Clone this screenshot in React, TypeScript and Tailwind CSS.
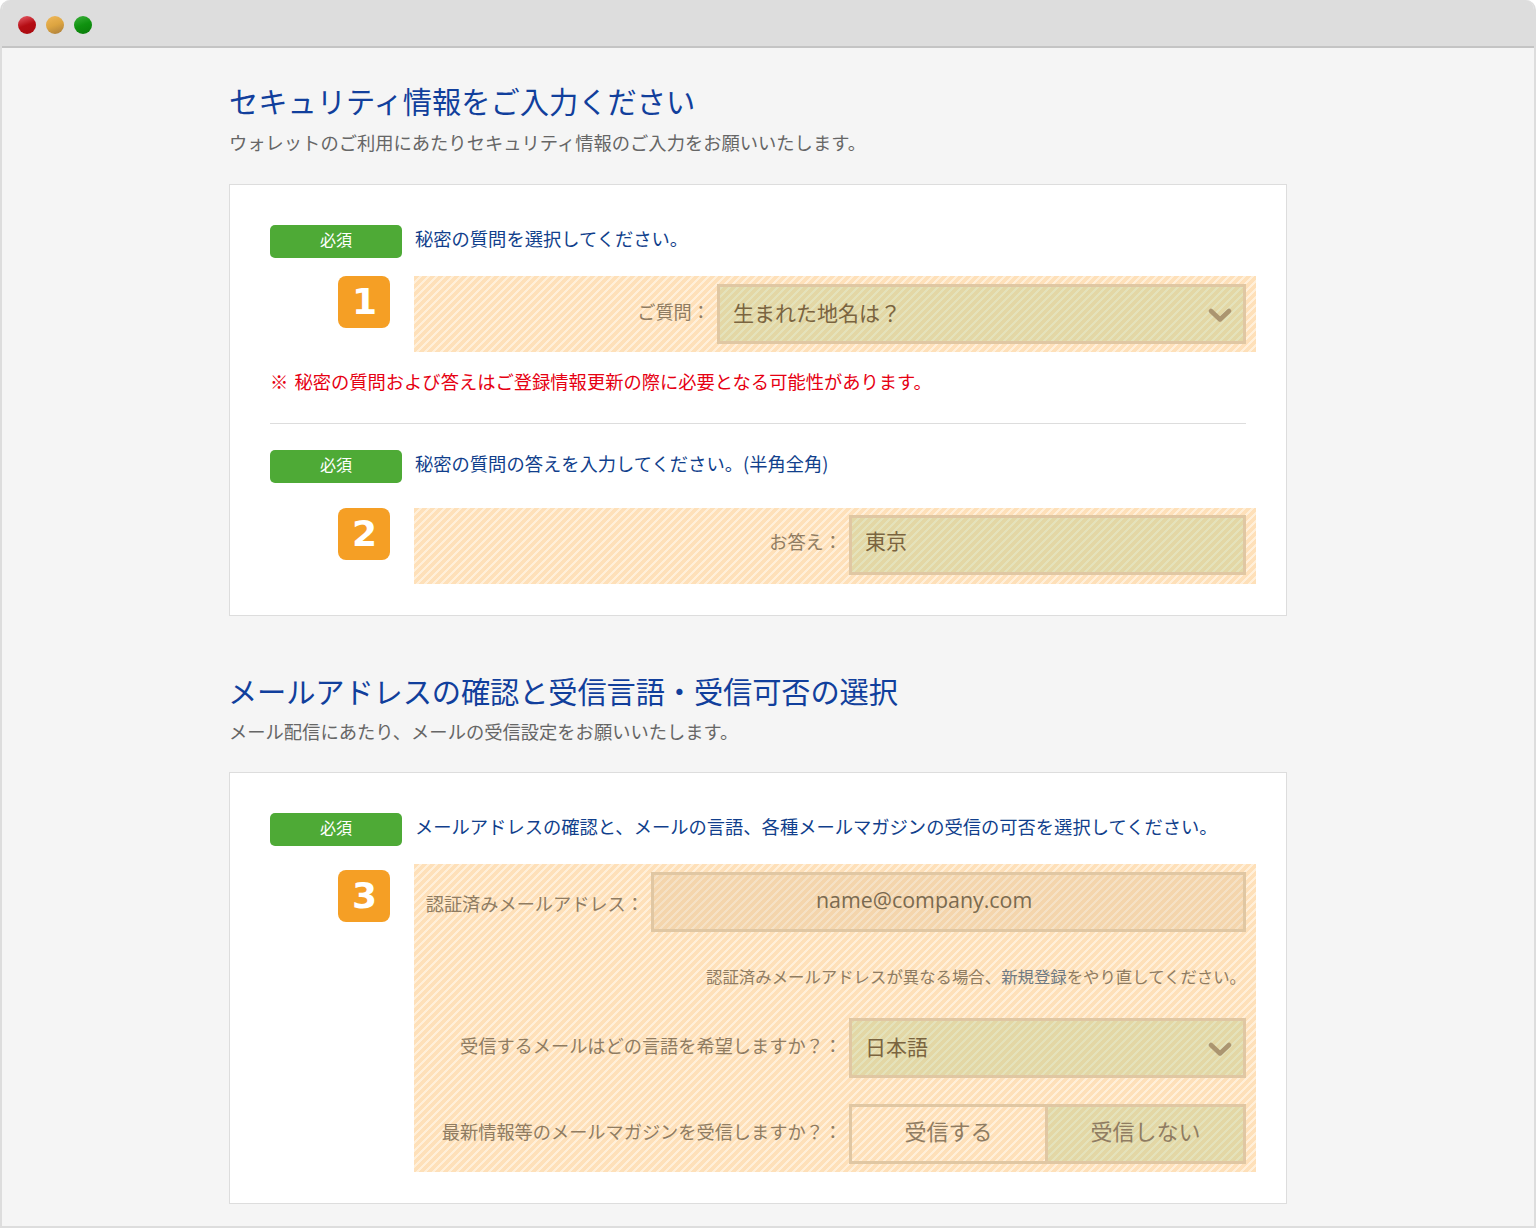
import React from 'react';

const jp = 'font-["Noto_Sans_CJK_JP","Liberation_Sans",sans-serif]';
const hatch =
    'bg-[repeating-linear-gradient(135deg,#fee0b9_0px,#fee0b9_3.54px,#ffefd9_3.54px,#ffefd9_5.66px)]';
const field = 'border-[3px] border-[#e0c7a3] bg-[#a4c476]/30 text-[#7a6440]';

function Required({ children }: { children: React.ReactNode }) {
    return (
        <div className="flex items-start">
            <div className="w-[132px] h-[33px] pb-[2px] rounded-[5px] bg-[#4eaa36] text-white text-[16px] leading-[29px] text-center">
                必須
            </div>
            <p className="ml-[13px] text-[18.3px] leading-[27px] text-[#113f8c] whitespace-nowrap">
                {children}
            </p>
        </div>
    );
}

function Step({ n, className = '' }: { n: number; className?: string }) {
    return (
        <div className={`w-[52px] h-[52px] ml-[68px] mr-[24px] pl-[1px] shrink-0 rounded-[8px] bg-[#f59f25] text-white text-center font-['DejaVu_Sans'] font-bold text-[36px] leading-[52px] ${className}`}>
            {n}
        </div>
    );
}

function Chevron() {
    return (
        <svg width="24" height="16" viewBox="0 0 24 16" className="shrink-0 mt-[6px]">
            <polyline
                points="3,3 12,11.5 21,3"
                fill="none"
                stroke="#ab9570"
                strokeWidth="4.5"
                strokeLinecap="round"
                strokeLinejoin="round"
            />
        </svg>
    );
}

function Select({ width, value }: { width: string; value: string }) {
    return (
        <div className={`${width} h-[60px] pl-[13px] pr-[11px] pb-[2px] flex items-center justify-between text-[21px] ${field}`}>
            <span>{value}</span>
            <Chevron />
        </div>
    );
}

function Label({ children, className = 'pb-[4px]' }: { children: React.ReactNode; className?: string }) {
    return (
        <span className={`mr-[7px] text-[18.2px] text-[#8f7c62] whitespace-nowrap ${className}`}>{children}</span>
    );
}

function Panel({ children, className }: { children: React.ReactNode; className: string }) {
    return (
        <div className={`w-[1058px] bg-white border border-[#dddddd] pl-[40px] pr-[30px] pt-[40px] ${className}`}>
            {children}
        </div>
    );
}

export default function App() {
    return (
        <div className={`w-[1536px] h-[1228px] overflow-hidden bg-white ${jp}`}>
            <div className="h-full flex flex-col rounded-t-[10px] overflow-hidden border-x-2 border-b-2 border-[#dddddd] bg-[#f5f5f5]">
                {/* Window bar */}
                <div className="h-[48px] shrink-0 flex items-center gap-[10px] pl-[18px] pt-[4px] -mx-[2px] bg-[#dddddd] border-b-2 border-[#c4c4c4]">
                    <div className="w-[18px] h-[18px] rounded-full bg-[linear-gradient(160deg,#e8606c,#b50d14_50%,#a80a10)]" />
                    <div className="w-[18px] h-[18px] rounded-full bg-[linear-gradient(160deg,#f0b85a,#dca440_50%,#a87c3c)]" />
                    <div className="w-[18px] h-[18px] rounded-full bg-[linear-gradient(160deg,#3cb03c,#0f920f_50%,#0a7a0a)]" />
                </div>

                <main className="pl-[227px]">
                    <h1 className="mt-[30px] text-[29.25px] leading-[44px] text-[#113f9c]">
                        セキュリティ情報をご入力ください
                    </h1>
                    <p className="mt-[7px] text-[18.3px] leading-[26px] text-[#666666]">
                        ウォレットのご利用にあたりセキュリティ情報のご入力をお願いいたします。
                    </p>

                    <Panel className="mt-[29px] h-[432px]">
                        <Required>秘密の質問を選択してください。</Required>
                        <div className="flex mt-[18px]">
                            <Step n={1} />
                            <div className={`flex-1 h-[76px] pr-[10px] flex items-center justify-end ${hatch}`}>
                                <Label>ご質問：</Label>
                                <Select width="w-[529px]" value="生まれた地名は？" />
                            </div>
                        </div>
                        <p className="mt-[15px] text-[18.3px] leading-[28px] text-[#e60012]">
                            <span className="mr-[2px]">※</span> 秘密の質問および答えはご登録情報更新の際に必要となる可能性があります。
                        </p>
                        <div className="mt-[28px] mb-[26px] mr-[10px] h-px bg-[#dddddd]" />
                        <Required>秘密の質問の答えを入力してください。(半角全角)</Required>
                        <div className="flex mt-[25px]">
                            <Step n={2} />
                            <div className={`flex-1 h-[76px] pr-[10px] pb-[2px] flex items-center justify-end ${hatch}`}>
                                <Label className="pb-[6px]">お答え：</Label>
                                <div className={`w-[397px] h-[60px] pl-[13px] pb-[8px] flex items-center text-[21px] ${field}`}>
                                    東京
                                </div>
                            </div>
                        </div>
                    </Panel>

                    <h2 className="mt-[52px] -ml-[1px] text-[29.25px] tracking-[-0.13px] leading-[44px] text-[#113f9c]">
                        メールアドレスの確認と受信言語・受信可否の選択
                    </h2>
                    <p className="mt-[6px] text-[18.3px] leading-[26px] text-[#666666]">
                        メール配信にあたり、メールの受信設定をお願いいたします。
                    </p>

                    <Panel className="mt-[28px] h-[432px]">
                        <Required>
                            メールアドレスの確認と、メールの言語、各種メールマガジンの受信の可否を選択してください。
                        </Required>
                        <div className="flex mt-[18px]">
                            <Step n={3} className="mt-[6px]" />
                            <div className={`flex-1 h-[308px] pt-[8px] pr-[10px] flex flex-col items-end ${hatch}`}>
                                <div className="flex items-center">
                                    <Label className="pt-[4px]">認証済みメールアドレス：</Label>
                                    <div className="w-[595px] h-[60px] pl-[162px] pb-[4px] flex items-center border-[3px] border-[#e0c7a3] bg-[#cda878]/20 text-[#7a6a50] font-['Open_Sans'] text-[21.4px]">
                                        name@company.com
                                    </div>
                                </div>
                                <p className="mt-[30px] text-[16.4px] leading-[28px] text-[#8f7c62]">
                                    認証済みメールアドレスが異なる場合、<span className="text-[#6f7a82]">新規登録</span>をやり直してください。
                                </p>
                                <div className="mt-[28px] flex items-center">
                                    <Label className="pb-[5px]">受信するメールはどの言語を希望しますか？：</Label>
                                    <Select width="w-[397px]" value="日本語" />
                                </div>
                                <div className="mt-[26px] flex items-center">
                                    <Label className="pb-[5px]">最新情報等のメールマガジンを受信しますか？：</Label>
                                    <div className="w-[397px] h-[60px] flex border-[3px] border-[#e0c7a3] text-[22px] text-[#8f7c62]">
                                        <div className="w-[196px] pb-[7px] flex items-center justify-center border-r-[3px] border-[#e0c7a3]">
                                            受信する
                                        </div>
                                        <div className="flex-1 pb-[7px] flex items-center justify-center bg-[#a4c476]/30">
                                            受信しない
                                        </div>
                                    </div>
                                </div>
                            </div>
                        </div>
                    </Panel>
                </main>
            </div>
        </div>
    );
}
